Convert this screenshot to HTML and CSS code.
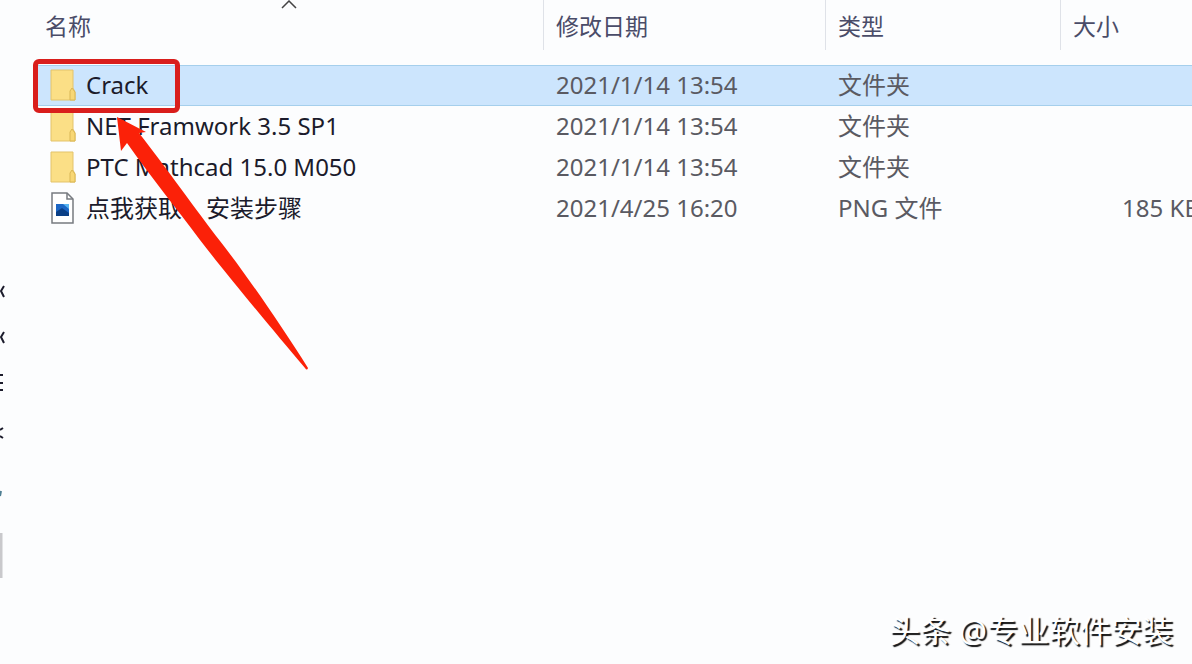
FILE: index.html
```html
<!DOCTYPE html>
<html lang="zh-CN">
<head>
<meta charset="UTF-8">
<meta name="viewport" content="width=device-width, initial-scale=1.0">
<title>Crack</title>
<link rel="stylesheet" href="styles.css">
</head>
<body>
  <div class="explorer">
    <!-- right edge of the navigation pane -->
    <aside class="nav-pane">
      <svg width="5" height="300" viewBox="0 0 5 300" fill="none" stroke="#1c1c2c" stroke-width="2">
        <path d="M4 6L1 11L4 17M4 52L1 57L4 63M0 95H3M0 103H3M0 110H3M3 148L0 150M0 156L3 158"/>
        <path d="M1 211L0 216" stroke="#4f7f93"/>
        <path d="M1 253V298" stroke="#c9c9cc" stroke-width="3"/>
      </svg>
    </aside>

    <main class="files">
      <table class="file-table">
        <thead>
          <tr>
            <th class="col-name">
              <button type="button">名称</button>
              <svg class="sort-arrow" width="16" height="10" viewBox="0 0 16 10"><path d="M1 8L8 1L15 8" fill="none" stroke="#444" stroke-width="1.5"/></svg>
            </th>
            <th class="col-date"><button type="button">修改日期</button></th>
            <th class="col-type"><button type="button">类型</button></th>
            <th class="col-size"><button type="button">大小</button></th>
          </tr>
        </thead>
        <tbody>
          <tr class="selected">
            <td class="name"><div class="file">
              <svg class="icon" viewBox="0 0 26 32"><path d="M1 1H23V19L25 23V31H1Z" fill="#fbdf86" stroke="#e3c36a"/><path d="M20 31V22L22 19L25 23V31Z" fill="#f8d775" stroke="#d9b654"/></svg>
              <span>Crack</span>
            </div></td>
            <td>2021/1/14 13:54</td>
            <td>文件夹</td>
            <td class="size"></td>
          </tr>
          <tr>
            <td class="name"><div class="file">
              <svg class="icon" viewBox="0 0 26 32"><path d="M1 1H23V19L25 23V31H1Z" fill="#fbdf86" stroke="#e3c36a"/><path d="M20 31V22L22 19L25 23V31Z" fill="#f8d775" stroke="#d9b654"/></svg>
              <span>NET Framwork 3.5 SP1</span>
            </div></td>
            <td>2021/1/14 13:54</td>
            <td>文件夹</td>
            <td class="size"></td>
          </tr>
          <tr>
            <td class="name"><div class="file">
              <svg class="icon" viewBox="0 0 26 32"><path d="M1 1H23V19L25 23V31H1Z" fill="#fbdf86" stroke="#e3c36a"/><path d="M20 31V22L22 19L25 23V31Z" fill="#f8d775" stroke="#d9b654"/></svg>
              <span>PTC Mathcad 15.0 M050</span>
            </div></td>
            <td>2021/1/14 13:54</td>
            <td>文件夹</td>
            <td class="size"></td>
          </tr>
          <tr>
            <td class="name"><div class="file">
              <svg class="icon" viewBox="0 0 26 32"><path d="M2 1H17L23 7V31H2Z" fill="#fff" stroke="#777b80" stroke-width="1.5"/><path d="M17 1V7H23" fill="none" stroke="#777b80" stroke-width="1.5"/><rect x="6" y="12" width="13" height="12" fill="#1c66c4"/><path d="M6 24V20L12 16L19 21V24Z" fill="#0a3f86"/><path d="M13 12H19V17Z" fill="#58b4f0"/></svg>
              <span>点我获取　安装步骤</span>
            </div></td>
            <td>2021/4/25 16:20</td>
            <td>PNG 文件</td>
            <td class="size">185 KB</td>
          </tr>
        </tbody>
      </table>
    </main>

    <!-- annotation over the list -->
    <div class="highlight"></div>
    <svg class="pointer" width="192" height="256" viewBox="0 0 192 256">
      <path d="M0 2L29 17L22 18C50 54 80 96 103 126C128 158 162 207 191 253Q190 256 188 253C155 214 110 160 83 125C60 94 34 62 10 28L4 36Z" fill="#fb2108"/>
    </svg>
    <p class="watermark">头条 @专业软件安装</p>
  </div>
</body>
</html>
```

FILE: styles.css
```css
body {
  margin: 0;
  background-color: #fcfdfe;
  color: #5a5a62;
  font-family: "Noto Sans", "Noto Sans CJK SC", sans-serif;
  font-size: 24px;
  line-height: 32px;
}

.explorer {
  position: relative;
  display: flex;
  min-height: 100vh;
  overflow: hidden;
}

.nav-pane {
  width: 33px;
  flex: none;
  padding-top: 280px;
}

.files {
  flex: 1;
  min-width: 0;
}

.file-table {
  width: calc(100% + 8px);
  table-layout: fixed;
  border-collapse: collapse;
}

th {
  position: relative;
  height: 65px;
  padding: 0;
  vertical-align: top;
  font-size: 23px;
  font-weight: normal;
}

th button {
  display: block;
  width: 100%;
  height: 50px;
  padding: 2px 12px 0;
  border: none;
  border-right: 1px solid #dfe2e8;
  background: none;
  color: #4a4c68;
  font: inherit;
  text-align: left;
}

.col-name {
  width: 511px;
}

.col-date {
  width: 282px;
}

.col-type {
  width: 235px;
}

.col-size button {
  border-right: none;
}

.sort-arrow {
  position: absolute;
  top: 0;
  left: calc(50% - 8px);
}

td {
  height: 39px;
  padding: 0 0 2px 12px;
  white-space: nowrap;
}

.selected td {
  background-color: #cce5fd;
  box-shadow: inset 0 1px #a5cfec, inset 0 -1px #a5cfec;
}

.name {
  padding-left: 17px;
  color: #1b1b2b;
}

.file {
  display: flex;
  align-items: center;
  gap: 10px;
}

.icon {
  width: 26px;
  height: 32px;
}

.size {
  padding-left: 0;
  text-align: right;
}

.highlight {
  position: absolute;
  top: 59px;
  left: 33px;
  width: 137px;
  height: 44px;
  border: 5px solid #d91e1c;
  border-radius: 6px;
}

.pointer {
  position: absolute;
  top: 115px;
  left: 117px;
}

.watermark {
  position: absolute;
  right: 19px;
  bottom: 14px;
  margin: 0;
  color: #fff;
  font-size: 31px;
  line-height: 40px;
  text-shadow: 2px 2px 1px #111;
}
```
